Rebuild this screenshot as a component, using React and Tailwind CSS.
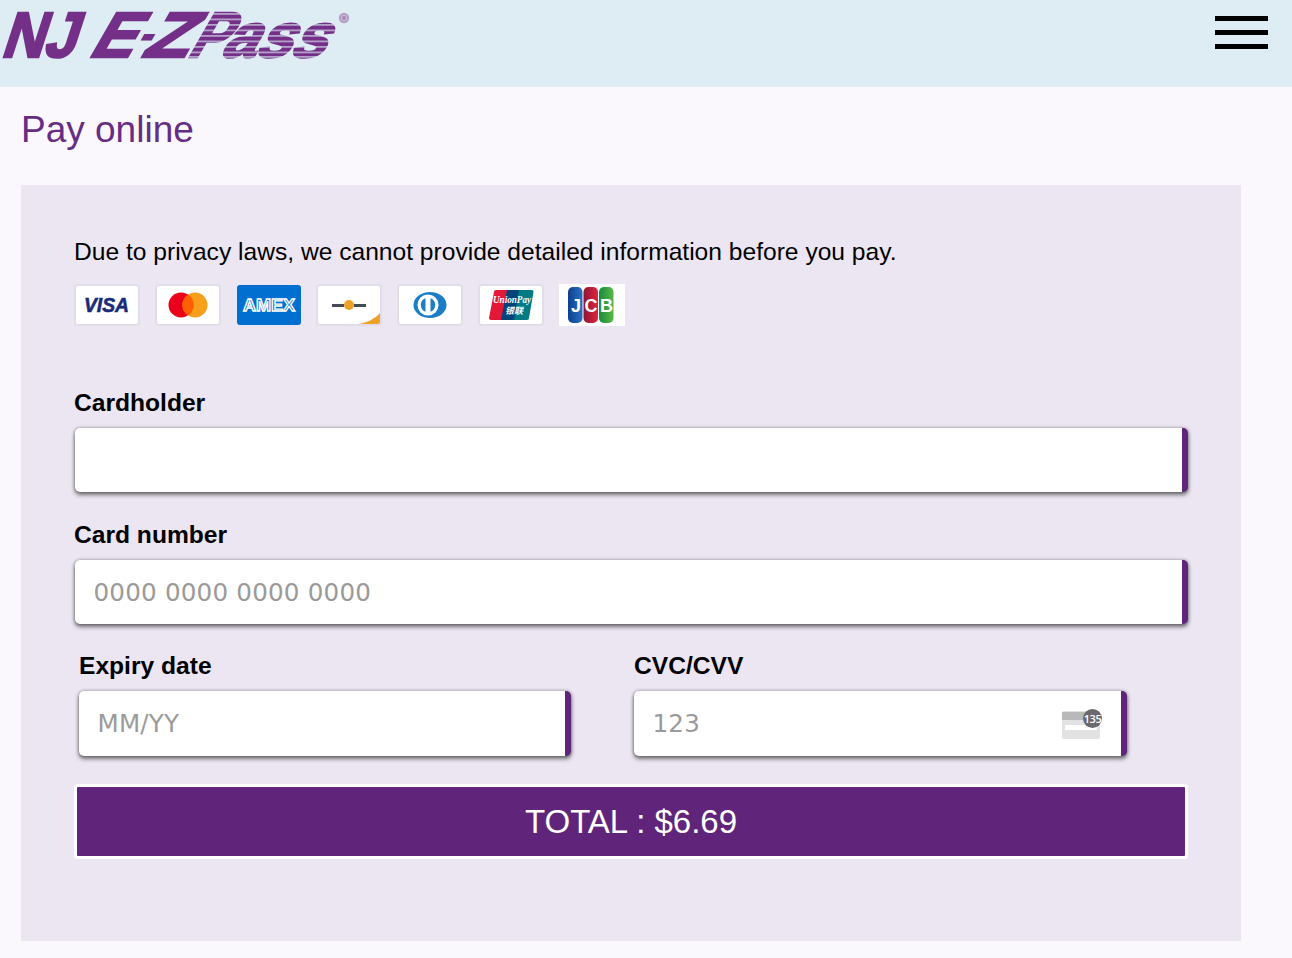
const sans = "font-['Liberation_Sans',Arial,sans-serif]";

function Logo() {
  const lsans = "'Liberation Sans',sans-serif";
  const stripes = [13, 18.5, 24, 29.5, 35, 40.5, 46, 51.5, 56];
  return (
    <svg width="400" height="80" viewBox="0 0 400 80" className="block" role="img" aria-label="NJ E-ZPass">
      <g fill="#743089" stroke="#743089" strokeWidth="2.4" fontFamily={lsans} fontWeight="700">
        <g transform="translate(0 57) skewX(-18)">
          <text x="0" y="0" fontSize="64" textLength="75" lengthAdjust="spacingAndGlyphs">NJ</text>
        </g>
        <g transform="translate(0 57) skewX(-30)">
          <text fontSize="64">
            <tspan x="87" y="0" textLength="43" lengthAdjust="spacingAndGlyphs">E</tspan>
            <tspan x="131" y="-11" fontSize="34">-</tspan>
            <tspan x="140" y="0" textLength="46" lengthAdjust="spacingAndGlyphs">Z</tspan>
            <tspan x="186" y="0" textLength="36" lengthAdjust="spacingAndGlyphs">P</tspan>
            <tspan x="219" y="0" fontSize="62">ass</tspan>
          </text>
        </g>
      </g>
      <g fill="#deedf4" opacity="0.6">
        {stripes.map((y) => (
          <rect key={y} x={186 + (58 - y) * 0.5} y={y} width="165" height="1.8" />
        ))}
      </g>
      <circle cx="344" cy="18" r="5.2" fill="#b7a0c6" />
      <circle cx="344" cy="18" r="2.6" fill="#a88cba" stroke="#d4c6dd" strokeWidth="0.8" />
    </svg>
  );
}

function CardBox({ children, className = "" }) {
  return (
    <div className={`w-[66px] h-[42px] rounded-[4px] border-2 border-[#e2dee9] bg-white flex items-center justify-center overflow-hidden shrink-0 ${className}`}>
      {children}
    </div>
  );
}

function Visa() {
  return (
    <CardBox>
      <svg width="52" height="30" viewBox="0 0 52 30">
        <text x="3" y="21.500" fontFamily="'Liberation Sans',sans-serif" fontWeight="700" fontStyle="italic" fontSize="21" textLength="45" lengthAdjust="spacingAndGlyphs" fill="#1a2a78" stroke="#1a2a78" strokeWidth="0.6">VISA</text>
      </svg>
    </CardBox>
  );
}

function Master() {
  return (
    <CardBox>
      <svg width="40" height="26" viewBox="0 0 40 26">
        <circle cx="13" cy="13" r="12.5" fill="#eb001b" />
        <circle cx="27" cy="13" r="12.5" fill="#f79e1b" />
        <path d="M20 2.400a12.500 12.500 0 0 1 0 21.200a12.500 12.500 0 0 1 0-21.200z" fill="#ff5f00" />
      </svg>
    </CardBox>
  );
}

function Amex() {
  return (
    <div className="w-[66px] h-[42px] flex items-center justify-center shrink-0">
      <div className="w-[64px] h-[40px] rounded-[3px] bg-[#016fd0] flex items-center justify-center">
        <svg width="56" height="24" viewBox="0 0 56 24">
          <text x="28" y="18" textAnchor="middle" fontFamily="'Liberation Sans',sans-serif" fontWeight="700" fontSize="17" textLength="52" lengthAdjust="spacingAndGlyphs" fill="#016fd0" stroke="#ffffff" strokeWidth="1.3">AMEX</text>
        </svg>
      </div>
    </div>
  );
}

function Maestro() {
  return (
    <CardBox className="relative">
      <div className="flex items-center">
        <div className="w-[12px] h-[3px] bg-[#444b55]" />
        <div className="w-[10px] h-[10px] rounded-full bg-[#eda127]" />
        <div className="w-[12px] h-[3px] bg-[#444b55]" />
      </div>
      <svg className="absolute right-0 bottom-0" width="22" height="12" viewBox="0 0 22 12">
        <path d="M0 12C8 11 17 7 22 1V12Z" fill="#eda127" />
      </svg>
    </CardBox>
  );
}

function Diners() {
  return (
    <CardBox>
      <svg width="34" height="26" viewBox="0 0 34 26">
        <ellipse cx="17" cy="13" rx="16.500" ry="13" fill="#1b7dc6" />
        <circle cx="15" cy="13" r="10.500" fill="#fff" />
        <path d="M12.500 6.200v13.600a7.300 7.300 0 0 1 0-13.600zM17.500 6.200a7.300 7.300 0 0 1 0 13.600z" fill="#1b7dc6" />
      </svg>
    </CardBox>
  );
}

function UnionPay() {
  return (
    <CardBox>
      <svg width="46" height="32" viewBox="0 0 46 32">
        <path d="M8 1h14L17 31H3a2 2 0 0 1-2-2L6 3a2 2 0 0 1 2-2z" fill="#e21836" />
        <path d="M19 1h14l-5 30H13z" fill="#00447c" />
        <path d="M31 1h13a2 2 0 0 1 1.500 2L41 29a2 2 0 0 1-2 2H26z" fill="#007b84" />
        <text x="24" y="14" textAnchor="middle" fontFamily="'Liberation Serif',serif" fontStyle="italic" fontWeight="700" fontSize="9.500" textLength="38" lengthAdjust="spacingAndGlyphs" fill="#fff">UnionPay</text>
        <text x="26" y="25" textAnchor="middle" fontFamily="'Noto Sans CJK SC',sans-serif" fontWeight="700" fontSize="9" fill="#fff" fontStyle="italic">银联</text>
      </svg>
    </CardBox>
  );
}

function Jcb() {
  return (
    <div className="w-[66px] h-[42px] bg-white flex items-center justify-center pr-[2px] shrink-0">
      <svg width="46" height="36" viewBox="0 0 46 36">
        <defs>
          <linearGradient id="jb" x1="0" x2="1" y1="0" y2="0">
            <stop offset="0" stopColor="#0d3f8f" />
            <stop offset="1" stopColor="#2a70c0" />
          </linearGradient>
          <linearGradient id="jr" x1="0" x2="1" y1="0" y2="0">
            <stop offset="0" stopColor="#8e1533" />
            <stop offset="1" stopColor="#e0263e" />
          </linearGradient>
          <linearGradient id="jg" x1="0" x2="1" y1="0" y2="0">
            <stop offset="0" stopColor="#1a8c3a" />
            <stop offset="1" stopColor="#58b848" />
          </linearGradient>
        </defs>
        <rect x="0" y="0" width="14.500" height="36" rx="5" fill="url(#jb)" />
        <rect x="15.500" y="0" width="14.500" height="36" rx="5" fill="url(#jr)" />
        <rect x="31" y="0" width="14.500" height="36" rx="5" fill="url(#jg)" />
        <g fontFamily="'Liberation Sans',sans-serif" fontWeight="700" fontSize="18" fill="#fff">
          <text x="3" y="25">J</text>
          <text x="16.500" y="25">C</text>
          <text x="32" y="25">B</text>
        </g>
      </svg>
    </div>
  );
}

function Field({ label, placeholder, className = "", inputWidth = "", children }) {
  return (
    <div className={className}>
      <div className={`${sans} text-[24.6px] leading-[30px] font-bold text-black`}>{label}</div>
      <div className={`relative h-[64.3px] mt-[10px] ${inputWidth} bg-white rounded-[5px] border-r-[6px] border-[#60257a] shadow-[0_0_3px_1px_rgba(0,0,0,0.22),0_3px_4px_0_rgba(60,60,60,0.65)] flex items-center pl-[18.5px]`}>
        <input
          readOnly
          placeholder={placeholder}
          className="flex-1 min-w-0 pt-[2px] bg-transparent outline-none font-['DejaVu_Sans',sans-serif] text-[24.6px] tracking-[0.2px] text-black placeholder:text-[#9a9a9a]"
        />
        {children}
      </div>
    </div>
  );
}

function CvcIcon() {
  return (
    <div className="relative w-[42px] h-[30px] mr-[19px] shrink-0">
      <div className="absolute left-[2px] top-[2px] w-[38px] h-[28px] rounded-[2px] bg-[#e2e2e2]">
        <div className="mt-px h-[8px] bg-[#b9b9b9]" />
        <div className="mt-[5px] mx-[3px] h-[5px] rounded-[1px] bg-white" />
      </div>
      <div className="absolute right-0 top-0 w-[19px] h-[19px] rounded-full bg-[#6a6a6e] flex items-center justify-center">
        <span className="font-['Open_Sans',sans-serif] text-[11px] leading-none font-semibold text-white tracking-[-0.5px]">135</span>
      </div>
    </div>
  );
}

export default function App() {
  return (
    <div className={`${sans} w-[1292px] h-[958px] overflow-hidden bg-[#faf8fc]`}>
      <header className="h-[87px] bg-[#deedf4] flex justify-between overflow-hidden">
        <Logo />
        <div className="pt-[16px] pr-[24px] flex flex-col gap-[9px]">
          <div className="w-[53px] h-[5px] bg-black" />
          <div className="w-[53px] h-[5px] bg-black" />
          <div className="w-[53px] h-[5px] bg-black" />
        </div>
      </header>
      <main className="pl-[21px]">
        <h1 className="mt-[20px] text-[37px] leading-[46px] text-[#662d84]">Pay online</h1>
        <section className="mt-[32px] w-[1220px] h-[756px] bg-[#ece6f2] pl-[53px] pr-[53px] pt-[52px]">
          <p className="text-[24.6px] leading-[30px] text-black">Due to privacy laws, we cannot provide detailed information before you pay.</p>
          <div className="mt-[17px] flex gap-[14.8px]">
            <Visa />
            <Master />
            <Amex />
            <Maestro />
            <Diners />
            <UnionPay />
            <Jcb />
          </div>
          <Field label="Cardholder" className="mt-[61.5px] w-[1114px]" inputWidth="ml-px" />
          <Field label="Card number" placeholder="0000 0000 0000 0000" className="mt-[28px] w-[1114px]" inputWidth="ml-px" />
          <div className="mt-[27.4px] flex">
            <Field label="Expiry date" placeholder="MM/YY" className="w-[492px] ml-[5px]" />
            <Field label="CVC/CVV" placeholder="123" className="w-[493px] ml-[63px]">
              <CvcIcon />
            </Field>
          </div>
          <button className="mt-[28.5px] w-[1114px] h-[75px] bg-[#60257a] border-[3px] border-white rounded-[4px] text-white text-[33px] leading-none">TOTAL : $6.69</button>
        </section>
      </main>
    </div>
  );
}
